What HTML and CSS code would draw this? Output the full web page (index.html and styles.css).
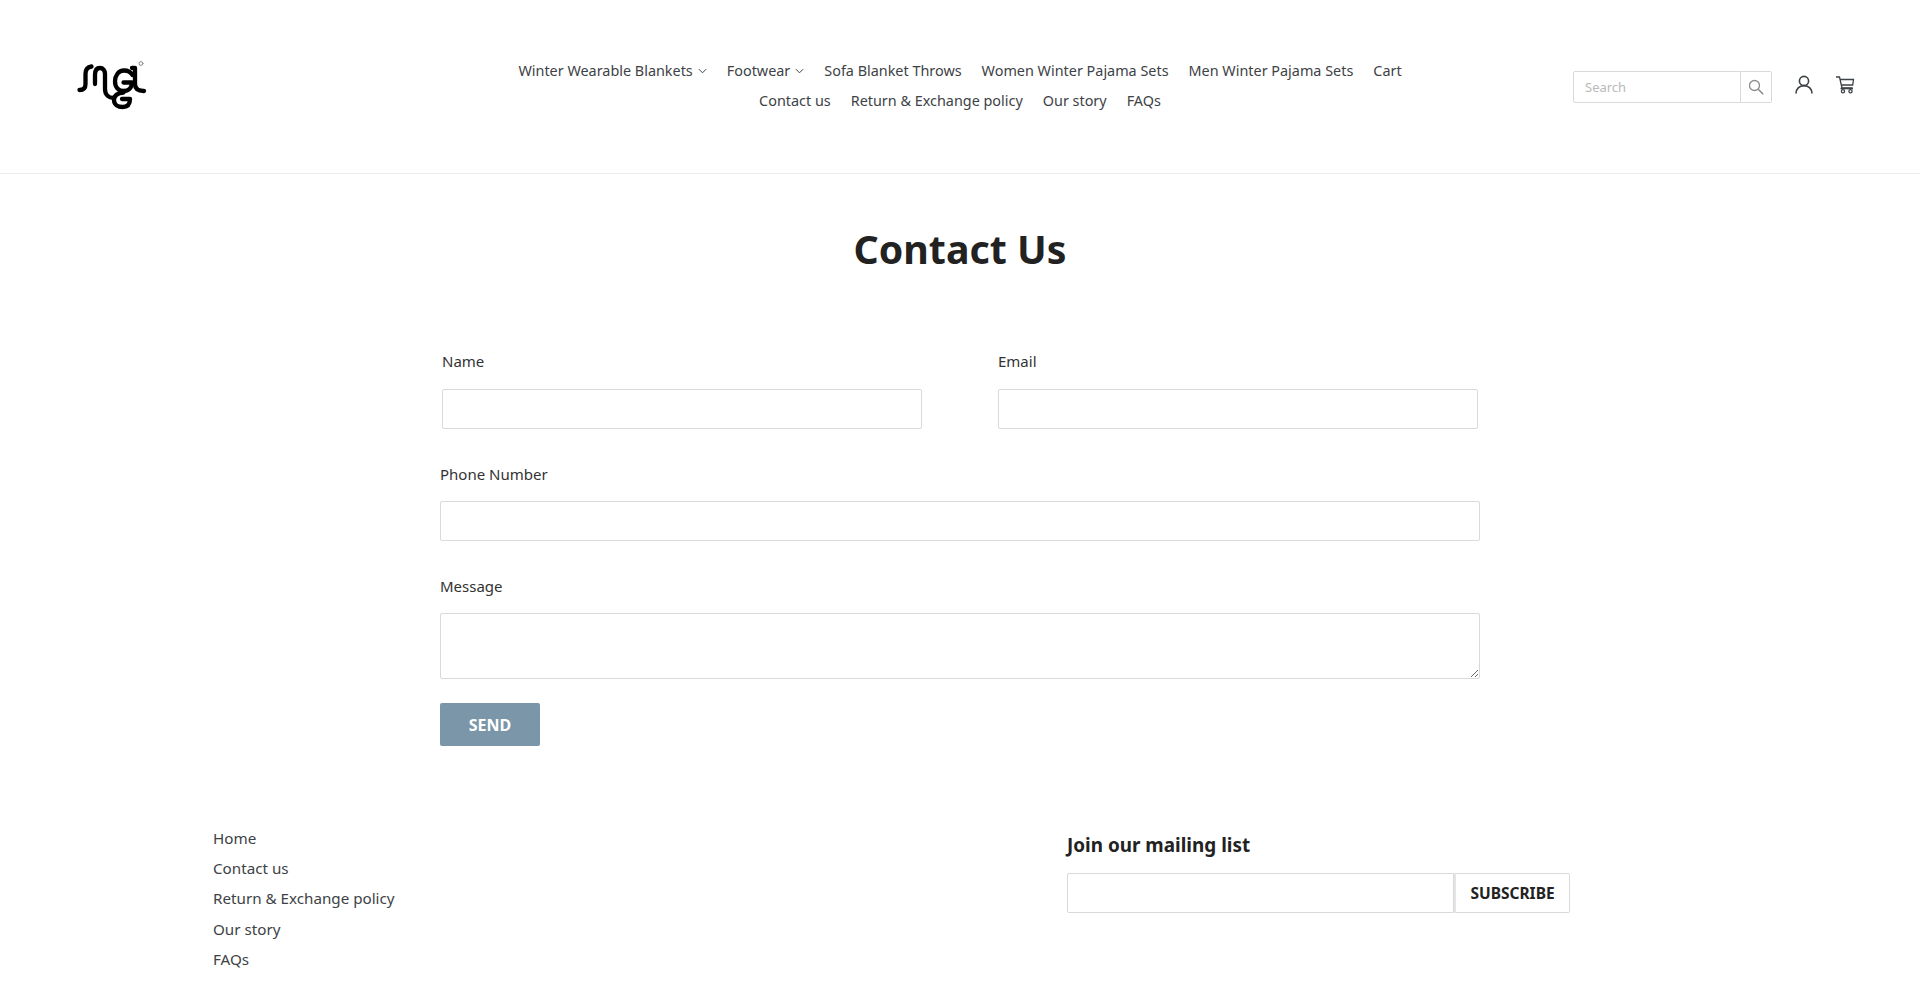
FILE: index.html
```html
<!DOCTYPE html>
<html lang="en">
<head>
<meta charset="utf-8">
<title>Contact Us</title>
<link rel="stylesheet" href="styles.css">
</head>
<body>
<header class="site-header">
  <a class="logo" href="#" aria-label="Home">
    <svg width="72" height="52" viewBox="0 0 72 52" fill="none" stroke="#000" stroke-width="4.300" stroke-linecap="round" stroke-linejoin="round">
      <path d="M3.500 30C7.500 30 9.500 28 9.500 24V14C9.500 10 11.500 7 15.500 6.500"/>
      <path d="M19 24V15C19 10 21 8 24 8C27 8 29 10.500 29 14V29C29 35 33 38 37.500 38"/>
      <path d="M56.500 15C54.500 11.500 51 10.500 48 10.500C42.500 10.500 39 15.500 39 21.500C39 27 42.500 31 47.500 31C52.500 31 56 27.500 56 22.500H47.500"/>
      <path d="M47.500 32.500C41.500 32.500 38 36 38 40C38 44.500 42 47 46.500 47C51 47 54 44.500 54 39H46"/>
      <path d="M56 8H59V24C59 28.500 61.500 31 68 31"/>
      <circle cx="65" cy="3.500" r="1.900" stroke="#888" stroke-width="1"/>
    </svg>
  </a>
  <nav class="main-nav">
    <ul class="nav-list">
      <li><a href="#">Winter Wearable Blankets<svg class="chev" viewBox="0 0 10 6" width="9" height="6"><path d="M1 1l4 4 4-4"/></svg></a></li>
      <li><a href="#">Footwear<svg class="chev" viewBox="0 0 10 6" width="9" height="6"><path d="M1 1l4 4 4-4"/></svg></a></li>
      <li><a href="#">Sofa Blanket Throws</a></li>
      <li><a href="#">Women Winter Pajama Sets</a></li>
      <li><a href="#">Men Winter Pajama Sets</a></li>
      <li><a href="#">Cart</a></li>
      <li class="break"></li>
      <li><a href="#">Contact us</a></li>
      <li><a href="#">Return &amp; Exchange policy</a></li>
      <li><a href="#">Our story</a></li>
      <li><a href="#">FAQs</a></li>
    </ul>
  </nav>
  <div class="tools">
    <form class="search">
      <input class="search-input" type="text" placeholder="Search">
      <button class="search-btn" type="button" aria-label="Search">
        <svg width="16" height="16" viewBox="0 0 16 16" fill="none" stroke="#8c8c8c" stroke-width="1.3"><circle cx="6.500" cy="6.500" r="5"/><path d="M10.200 10.200l5 5" stroke-width="1.600"/></svg>
      </button>
    </form>
    <a class="icon-link icon-account" href="#" aria-label="Account">
      <svg width="18" height="19" viewBox="0 0 18 19" fill="none" stroke="#3d4246" stroke-width="1.600"><circle cx="9" cy="6" r="4.600"/><path d="M1 18.500c0-4.500 3.200-7.900 8-7.900s8 3.400 8 7.900"/></svg>
    </a>
    <a class="icon-link" href="#" aria-label="Cart">
      <svg width="20" height="18" viewBox="0 0 20 18" fill="none" stroke="#3d4246" stroke-width="1.300"><path d="M1 1h3.500l2.500 11h10.500M5 3.500h13.500l-.8 5.500H6.200"/><path d="M5.500 12.500h12.500" stroke-width="1.600"/><circle cx="8" cy="15.300" r="1.600"/><circle cx="15.500" cy="15.300" r="1.600"/></svg>
    </a>
  </div>
</header>

<main class="contact">
  <h1 class="page-title">Contact Us</h1>
  <form class="contact-form">
    <div class="two-col">
      <div class="field">
        <label class="field-label" for="name">Name</label>
        <input class="text-input" id="name" type="text">
      </div>
      <div class="field">
        <label class="field-label" for="email">Email</label>
        <input class="text-input" id="email" type="email">
      </div>
    </div>
    <div class="field">
      <label class="field-label" for="phone">Phone Number</label>
      <input class="text-input" id="phone" type="tel">
    </div>
    <div class="field field-last">
      <label class="field-label" for="message">Message</label>
      <textarea class="text-input message" id="message"></textarea>
    </div>
    <button class="send-btn" type="button">SEND</button>
  </form>
</main>

<footer class="site-footer">
  <ul class="footer-links">
    <li><a href="#">Home</a></li>
    <li><a href="#">Contact us</a></li>
    <li><a href="#">Return &amp; Exchange policy</a></li>
    <li><a href="#">Our story</a></li>
    <li><a href="#">FAQs</a></li>
  </ul>
  <div class="newsletter">
    <h2 class="newsletter-title">Join our mailing list</h2>
    <form class="newsletter-form">
      <input class="newsletter-input" type="email" aria-label="Email">
      <button class="subscribe-btn" type="button">SUBSCRIBE</button>
    </form>
  </div>
</footer>
</body>
</html>
```

FILE: styles.css
```css
* { box-sizing: border-box; }
html, body { margin: 0; padding: 0; }
body {
  height: 987px;
  overflow: hidden;
  background: #fff;
  color: #3d4246;
  font-family: "Noto Sans", "Open Sans", sans-serif;
  font-size: 15px;
}
a { color: inherit; text-decoration: none; }
ul { list-style: none; margin: 0; padding: 0; }

.site-header {
  height: 174px;
  border-bottom: 1px solid #ececec;
  display: grid;
  grid-template-columns: 1fr auto 1fr;
  align-items: center;
  padding: 0 65px;
}
.logo { width: 72px; display: block; margin: -2px 0 0 11px; }
.logo svg { display: block; }
.nav-list {
  width: 980px;
  margin: -1px 0 0;
  display: flex;
  flex-wrap: wrap;
  justify-content: center;
  column-gap: 20px;
  font-size: 14.4px;
  line-height: 30px;
}
.nav-list .break { width: 100%; height: 0; }
.chev { margin-left: 5px; fill: none; stroke: #3d4246; stroke-width: 1.1; vertical-align: 2px; }

.tools { display: flex; align-items: center; justify-content: flex-end; }
.search { display: flex; width: 199px; height: 32px; }
.search-input {
  width: 168px;
  border: 1px solid #d9d9d9;
  border-radius: 2px 0 0 2px;
  padding: 0 11px;
  font: inherit;
  font-size: 13px;
  outline: 0;
}
.search-input::placeholder { color: #b9b9b9; }
.search-btn {
  width: 31px;
  border: 1px solid #d9d9d9;
  border-left: 0;
  border-radius: 0 2px 2px 0;
  background: #fff;
  padding: 0;
  display: flex;
  align-items: center;
  justify-content: center;
}
.icon-link { display: block; margin-left: 22px; line-height: 0; margin-top: -4px; }
.icon-account { margin-left: 23px; }

.contact { width: 1040px; margin: 0 auto; }
.page-title {
  margin: 47px 0 0;
  text-align: center;
  color: #222;
  font-size: 39.3px;
  font-weight: 700;
  line-height: 56px;
}
.contact-form { margin-top: 74px; }
.two-col {
  display: grid;
  grid-template-columns: 480px 480px;
  column-gap: 76px;
  padding: 0 2px;
}
.field { margin-bottom: 35px; }
.field-last { margin-bottom: 24px; }
.field-label { display: block; line-height: 20px; color: #333; margin-bottom: 17px; }
.two-col .field-label { margin-bottom: 18px; }
.text-input {
  display: block;
  width: 100%;
  height: 40px;
  border: 1px solid #d9d9d9;
  border-radius: 2px;
  background: #fff;
  outline: 0;
  font: inherit;
}
.message { height: 66px; }
.send-btn {
  display: block;
  width: 100px;
  height: 43px;
  border: 0;
  border-radius: 2px;
  background: #7a96a8;
  color: #fff;
  font: inherit;
  font-size: 16px;
  font-weight: 700;
}

.site-footer {
  width: 1494px;
  margin: 0 auto;
  padding: 77px 0 0;
  display: grid;
  grid-template-columns: 854px 503px;
}
.footer-links { line-height: 30.2px; font-size: 15.2px; }
.newsletter { padding-top: 8px; }
.newsletter-title { margin: 0 0 14px; font-size: 18.9px; font-weight: 700; color: #222; line-height: 28px; }
.newsletter-form { display: flex; height: 40px; }
.newsletter-input {
  width: 387px;
  border: 1px solid #d9d9d9;
  border-radius: 2px 0 0 2px;
  outline: 0;
}
.subscribe-btn {
  width: 116px;
  border: 1px solid #d9d9d9;
  border-left: 2px solid #e4e4e4;
  border-radius: 0 2px 2px 0;
  background: #fff;
  color: #222;
  font: inherit;
  font-size: 15.5px;
  font-weight: 700;
}
```
